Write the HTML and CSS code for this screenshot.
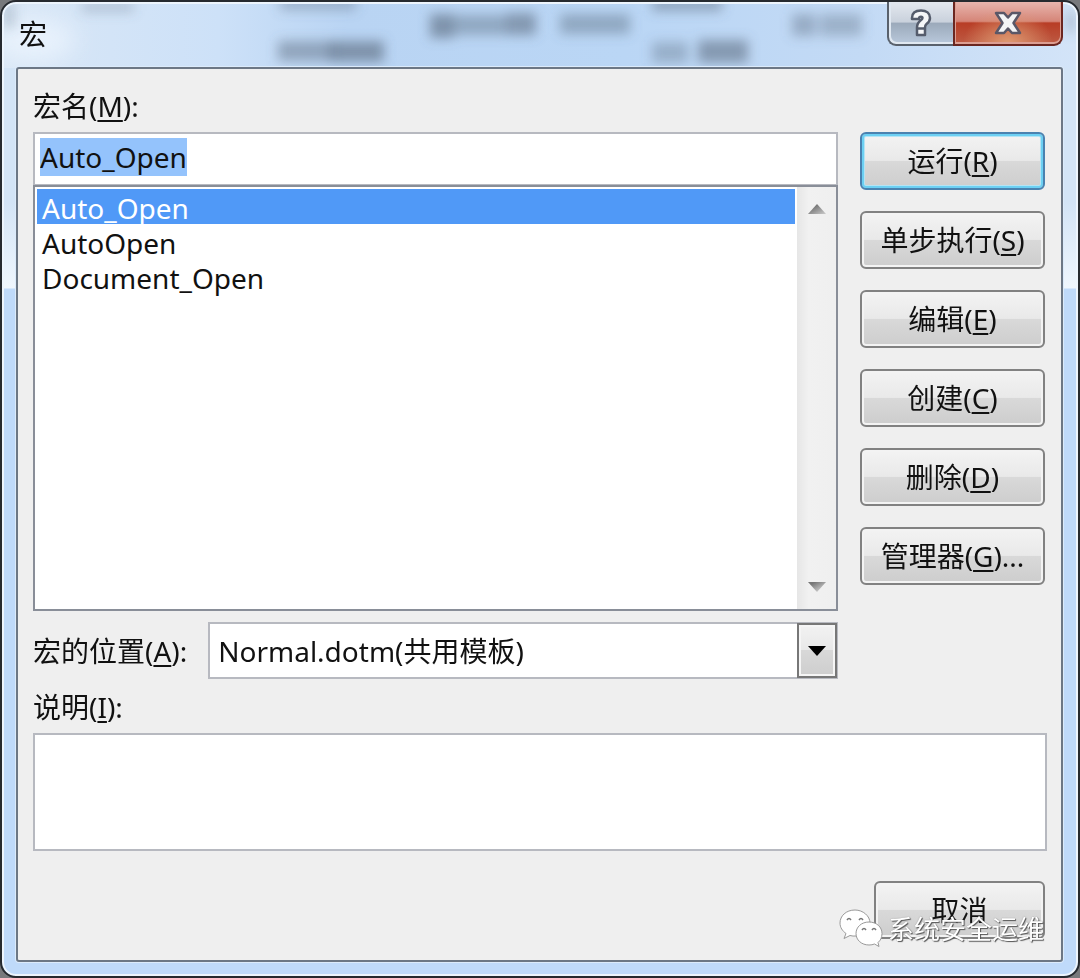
FILE: index.html
```html
<!DOCTYPE html>
<html lang="zh-CN">
<head>
<meta charset="utf-8">
<title>宏</title>
<link rel="stylesheet" href="styles.css">
</head>
<body>
<main class="dialog">
  <svg class="glass" viewBox="0 0 1072 64" preserveAspectRatio="none" aria-hidden="true">
    <defs>
      <linearGradient id="sky" x1="0" x2="1" y1="0" y2="0">
        <stop offset="0" stop-color="#d9e7f6"/><stop offset=".2" stop-color="#cde1f8"/>
        <stop offset=".32" stop-color="#b9d4f3"/><stop offset=".58" stop-color="#bad6f5"/>
        <stop offset=".8" stop-color="#c3daf5"/><stop offset="1" stop-color="#d3e4f8"/>
      </linearGradient>
      <filter id="soft" x="-20%" y="-50%" width="140%" height="200%"><feGaussianBlur stdDeviation="6"/></filter>
      <filter id="wide" x="-50%" y="-50%" width="200%" height="200%"><feGaussianBlur stdDeviation="12"/></filter>
    </defs>
    <rect width="1072" height="64" fill="url(#sky)"/>
    <ellipse cx="30" cy="36" rx="42" ry="22" fill="#f0f7ff" opacity=".7" filter="url(#wide)"/>
    <g fill="#5f7086" filter="url(#soft)">
      <rect x="0" y="0" width="10" height="24" opacity=".3"/>
      <rect x="78" y="-2" width="52" height="10" opacity=".3"/>
      <rect x="276" y="-6" width="76" height="12" opacity=".4"/>
      <rect x="274" y="37" width="56" height="20" opacity=".5"/>
      <rect x="326" y="37" width="54" height="21" opacity=".65"/>
      <rect x="426" y="10" width="24" height="24" opacity=".65"/>
      <rect x="450" y="11" width="52" height="20" opacity=".45"/>
      <rect x="502" y="9" width="30" height="22" opacity=".6"/>
      <rect x="556" y="10" width="70" height="20" opacity=".45"/>
      <rect x="648" y="-6" width="70" height="13" opacity=".5"/>
      <rect x="648" y="38" width="36" height="21" opacity=".38"/>
      <rect x="694" y="36" width="50" height="23" opacity=".6"/>
      <rect x="788" y="10" width="24" height="22" opacity=".42"/>
      <rect x="816" y="10" width="42" height="22" opacity=".38"/>
      <rect x="1062" y="8" width="10" height="20" opacity=".3"/>
    </g>
  </svg>

  <header class="titlebar">
    <h1 class="title">宏</h1>
    <div class="caption">
      <button class="caption-help" type="button" aria-label="帮助">
        <svg width="22" height="28" viewBox="0 0 22 28" aria-hidden="true" fill="none">
          <path d="M2 9C2 3.500 6 1.500 11 1.500C16.500 1.500 20 4.500 20 9C20 12 18.500 13.500 16.500 15C15 16.200 15 17 15 18.500V26H7V18.500C7 14.500 8.500 13 10.500 11.500C12 10.500 12.500 10 12.500 9C12.500 8 12 7.700 11 7.700C9.700 7.700 9 8.200 8.800 10H2Z" fill="#f5f6f8" stroke="#555c6c" stroke-width="2.500" stroke-linejoin="round"/>
          <path d="M7.500 19.500H14.500" stroke="#555c6c" stroke-width="2.500"/>
        </svg>
      </button>
      <button class="caption-close" type="button" aria-label="关闭">
        <svg width="28" height="24" viewBox="0 0 28 24" aria-hidden="true">
          <path d="M2 2H10L14 6.500L18 2H26L19.500 12L26 22H18L14 17.500L10 22H2L8.500 12Z" fill="#f4f4f5" stroke="#5a5767" stroke-width="2.500" stroke-linejoin="round"/>
        </svg>
      </button>
    </div>
  </header>

  <form class="client">
    <label class="label" for="macro-name">宏名(<u>M</u>):</label>
    <div class="columns">
      <div class="macros">
        <input class="name" id="macro-name" type="text" value="Auto_Open" spellcheck="false" autocomplete="off">
        <div class="list">
          <select class="options" size="3" aria-label="宏">
            <option selected>Auto_Open</option>
            <option>AutoOpen</option>
            <option>Document_Open</option>
          </select>
          <div class="scrollbar">
            <button class="scroll" type="button" aria-label="向上">
              <svg width="18" height="10" viewBox="0 0 18 10" aria-hidden="true"><defs><linearGradient id="up" x1="0" x2="1" y1="0" y2="1"><stop offset=".3" stop-color="#777"/><stop offset="1" stop-color="#ccc"/></linearGradient></defs><path d="M0 10L9 0L18 10Z" fill="url(#up)"/></svg>
            </button>
            <button class="scroll" type="button" aria-label="向下">
              <svg width="18" height="10" viewBox="0 0 18 10" aria-hidden="true"><defs><linearGradient id="down" x1="0" x2="1" y1="0" y2="1"><stop offset=".2" stop-color="#777"/><stop offset=".8" stop-color="#ccc"/></linearGradient></defs><path d="M0 0H18L9 10Z" fill="url(#down)"/></svg>
            </button>
          </div>
        </div>
        <div class="location">
          <label class="label" for="macro-location">宏的位置(<u>A</u>):</label>
          <div class="combo">
            <select class="combo-select" id="macro-location">
              <option>Normal.dotm(共用模板)</option>
            </select>
            <span class="combo-arrow"><svg width="18" height="10" viewBox="0 0 18 10" aria-hidden="true"><path d="M0 0H18L9 10Z" fill="#000"/></svg></span>
          </div>
        </div>
      </div>
      <div class="actions">
        <button class="button button-default" type="button">运行(<u>R</u>)</button>
        <button class="button" type="button">单步执行(<u>S</u>)</button>
        <button class="button" type="button">编辑(<u>E</u>)</button>
        <button class="button" type="button">创建(<u>C</u>)</button>
        <button class="button" type="button">删除(<u>D</u>)</button>
        <button class="button" type="button">管理器(<u>G</u>)...</button>
      </div>
    </div>
    <label class="label label-description" for="description">说明(<u>I</u>):</label>
    <textarea class="description" id="description"></textarea>
    <div class="footer">
      <button class="button button-cancel" type="button">取消</button>
    </div>
  </form>

  <div class="watermark">
    <svg width="44" height="40" viewBox="0 0 44 40" aria-hidden="true" fill="#fff" stroke="#999" stroke-width="1">
      <path d="M16 1C7 1 1 7 1 14C1 18.500 3.500 22 7 24.500L5 29.500L11 26.500C13 27 15 27.300 17 27C24 27 31 21 31 14C31 7 24 1 16 1Z"/>
      <path d="M30 13C22.500 13 17 18 17 24.500C17 31 22.500 36 30 36C32 36 34 35.700 35.500 35L40 37.500L39 33.500C41.500 31.500 43 28.500 43 24.500C43 18 37.500 13 30 13Z"/>
      <g fill="none" stroke="#777" stroke-width="1.500"><path d="M8 11Q10 8 12 11M20 11Q22 8 24 11M23 21Q25 18 27 21M33 21Q35 18 37 21"/></g>
    </svg>
    <span>系统安全运维</span>
  </div>
</main>
<script src="script.js"></script>
</body>
</html>
```
FILE: styles.css
```css
* { box-sizing: border-box; }

body {
  margin: 0;
  background: #77797c;
  color: #111;
  font-family: "Noto Sans", "Noto Sans CJK SC", sans-serif;
  font-size: 28px;
  line-height: 36px;
}

input, select, textarea, button { font: inherit; color: inherit; margin: 0; }
u { text-underline-offset: 3px; text-decoration-thickness: 2px; }

.dialog {
  position: relative;
  display: flex;
  flex-direction: column;
  min-height: 100vh;
  padding: 0 15px 14px 14px;
  border: 2px solid #262a2f;
  border-radius: 16px;
  background: linear-gradient(#d3e4f6 0, #d3e4f6 200px, #eff6fd 286px, #bfdafa 287px);
  box-shadow: inset 0 0 0 2px #edf5fd;
}

.glass {
  position: absolute;
  top: 2px;
  left: 2px;
  width: calc(100% - 4px);
  height: 64px;
  border-radius: 12px 12px 0 0;
}

.titlebar {
  position: relative;
  display: flex;
  justify-content: space-between;
  height: 65px;
  padding-left: 3px;
}

.title { margin: 0; padding-top: 14px; font: inherit; }

.caption { display: flex; height: 44px; }

.caption-help, .caption-close {
  display: flex;
  align-items: center;
  justify-content: center;
  padding: 0;
  border: 2px solid #59616c;
  border-top: 0;
}

.caption-help {
  width: 66px;
  border-right: 0;
  border-radius: 0 0 0 9px;
  background: linear-gradient(#e3e8ef, #c9d1dc 48%, #9ba9ba 50%, #b9c9dc);
  box-shadow: inset 1px -1px 0 1px #e0e8f1;
}

.caption-close {
  width: 110px;
  border-color: #6b2620;
  border-radius: 0 0 9px 0;
  background: radial-gradient(ellipse at 50% 100%, #df9b72 0, transparent 60%), linear-gradient(#e8b5ad, #d58578 46%, #b83d26 50%, #bd5a43);
  box-shadow: inset 0 -1px 0 1px #dc9e92;
}

.client {
  position: relative;
  display: flex;
  flex: 1;
  flex-direction: column;
  padding: 19px 14px 21px 15px;
  border: 2px solid #6c7785;
  border-radius: 3px;
  background: #efefef;
  box-shadow: 0 0 0 1px #dcebfb;
}

.label { white-space: nowrap; }

.columns { display: flex; flex: 1; gap: 22px; margin-top: 8px; padding-right: 2px; }

.macros { display: flex; flex: 1; flex-direction: column; min-width: 0; }

.name {
  width: 100%;
  height: 53px;
  padding: 0 5px 4px;
  border: 2px solid #b7b9c0;
  border-bottom-width: 1px;
  border-radius: 0;
  outline: 0;
  background: #fff;
}

.name::selection { background: #94c3fc; color: #111; }

.list { display: flex; flex: 1; border: 2px solid #898e98; background: #fff; }

.options {
  flex: 1;
  min-width: 0;
  padding: 2px;
  border: 0;
  border-radius: 0;
  outline: 0;
  background: #fff;
  overflow: hidden;
}

.options option { height: 35px; min-height: 35px; padding: 0 5px; line-height: 35px; }

.options option:checked { background: #5099f7 linear-gradient(#5099f7, #5099f7); color: #fff; }

.scrollbar {
  display: flex;
  flex-direction: column;
  justify-content: space-between;
  width: 39px;
  background: linear-gradient(90deg, #e6e6e6, #f1f1f1 30%, #efefef);
}

.scroll {
  display: flex;
  align-items: center;
  justify-content: center;
  height: 44px;
  padding: 0;
  border: 0;
  background: transparent;
}

.location { display: flex; align-items: center; gap: 21px; margin-top: 11px; }

.combo { position: relative; flex: 1; height: 57px; }

.combo-select {
  width: 100%;
  height: 100%;
  padding: 0 48px 0 8px;
  border: 2px solid #b7b9c0;
  border-radius: 0;
  outline: 0;
  background: #fff;
  appearance: none;
}

.combo-arrow {
  position: absolute;
  top: 1px;
  right: 1px;
  bottom: 1px;
  display: flex;
  align-items: center;
  justify-content: center;
  width: 40px;
  border: 2px solid #777;
  background: linear-gradient(#f2f2f2, #e8e8e8 50%, #d8d8d8 50%, #cecece);
  box-shadow: inset 0 0 0 2px #f5f5f5;
  pointer-events: none;
}

.actions { display: flex; flex-direction: column; gap: 21px; width: 185px; }

.button {
  height: 58px;
  padding: 0;
  border: 2px solid #818181;
  border-radius: 6px;
  background: linear-gradient(#f3f3f3, #e9e9e9 49%, #d9d9d9 50%, #cdcdcd);
  box-shadow: inset 0 0 0 2px #f3f3f3;
  white-space: nowrap;
}

.button-default { border-color: #4a82b0; box-shadow: inset 0 0 0 2px #6cd0f3, inset 0 0 0 3px #b5e4f4; }

.label-description { margin-top: 10px; }

.description {
  display: block;
  width: 100%;
  height: 118px;
  margin-top: 8px;
  padding: 8px;
  border: 2px solid #b7b9c0;
  border-radius: 0;
  outline: 0;
  background: #fff;
  resize: none;
}

.footer { display: flex; justify-content: flex-end; margin-top: 30px; padding-right: 2px; }

.button-cancel { width: 171px; }

.watermark {
  position: absolute;
  right: 34px;
  bottom: 27px;
  display: flex;
  align-items: center;
  gap: 5px;
  color: #fff;
  font-size: 26px;
  text-shadow: 1px 1px 1px #555, 0 0 1px #777;
  pointer-events: none;
}
```
FILE: script.js
```js
const field = document.getElementById("macro-name");
field.focus();
field.select();
```
